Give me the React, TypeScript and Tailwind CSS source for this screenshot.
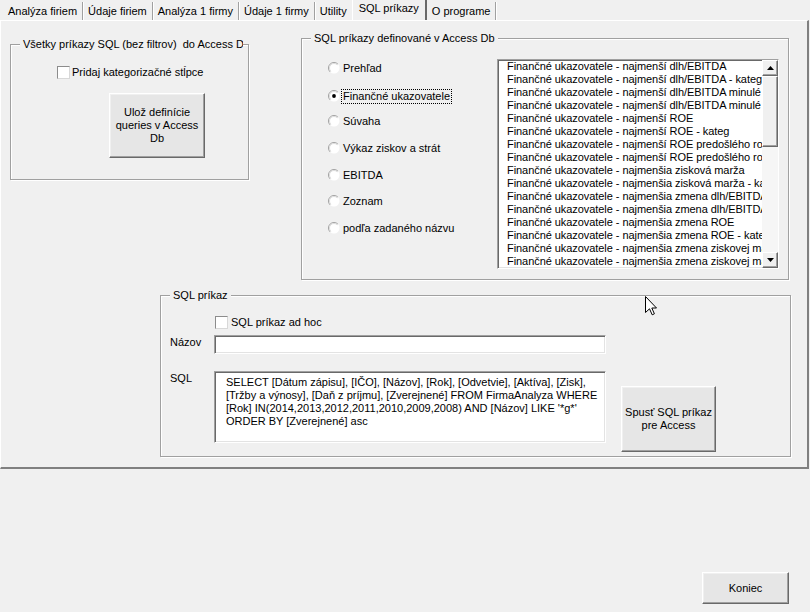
import React from "react";

const tabs = [
  "Analýza firiem",
  "Údaje firiem",
  "Analýza 1 firmy",
  "Údaje 1 firmy",
  "Utility",
  "SQL príkazy",
  "O programe",
];

const radios = [
  { label: "Prehľad", mt: "mt-[23px]" },
  { label: "Finančné ukazovatele", mt: "mt-[16px]", checked: true },
  { label: "Súvaha", mt: "mt-[13px]" },
  { label: "Výkaz ziskov a strát", mt: "mt-[15px]" },
  { label: "EBITDA", mt: "mt-[15px]" },
  { label: "Zoznam", mt: "mt-[14px]" },
  { label: "podľa zadaného názvu", mt: "mt-[15px]" },
];

const pre = "Finančné ukazovatele - ";
const items = [
  "najmenší dlh/EBITDA",
  "najmenší dlh/EBITDA - kategória",
  "najmenší dlh/EBITDA minulé",
  "najmenší dlh/EBITDA minulé - kategória",
  "najmenší ROE",
  "najmenší ROE - kateg",
  "najmenší ROE predošlého roku",
  "najmenší ROE predošlého roku - kategória",
  "najmenšia zisková marža",
  "najmenšia zisková marža - kategória",
  "najmenšia zmena dlh/EBITDA",
  "najmenšia zmena dlh/EBITDA - kategória",
  "najmenšia zmena ROE",
  "najmenšia zmena ROE - kategória",
  "najmenšia zmena ziskovej marže",
  "najmenšia zmena ziskovej marže - kategória",
];

const sqlLines = [
  "SELECT [Dátum zápisu], [IČO], [Názov], [Rok], [Odvetvie], [Aktíva], [Zisk],",
  "[Tržby a výnosy], [Daň z príjmu], [Zverejnené] FROM FirmaAnalyza WHERE",
  "[Rok] IN(2014,2013,2012,2011,2010,2009,2008) AND [Názov] LIKE '*g*'",
  "ORDER BY [Zverejnené] asc",
];

const btn =
  "flex flex-col items-center justify-center text-center leading-[13px] bg-[#e6e6e6] border border-t-white border-l-white border-r-[#696969] border-b-[#696969] shadow-[inset_-1px_-1px_0_#a0a0a0,inset_1px_1px_0_#f0f0f0]";

const sunken =
  "bg-white border border-t-[#a0a0a0] border-l-[#a0a0a0] border-r-white border-b-white shadow-[inset_1px_1px_0_#696969,inset_-1px_-1px_0_#e3e3e3]";

function Check() {
  return (
    <div className="w-[13px] h-[13px] shrink-0 bg-white border border-t-[#8c8c8c] border-l-[#8c8c8c] border-r-[#d8d8d8] border-b-[#d8d8d8]" />
  );
}

function Radio({ checked }: { checked?: boolean }) {
  return (
    <svg width="12" height="12" viewBox="0 0 12 12" className="shrink-0">
      <circle cx="6" cy="6" r="5.5" fill="#fff" />
      <path d="M2.1 9.9 A5.5 5.5 0 0 1 9.9 2.1" stroke="#a0a0a0" fill="none" />
      <path d="M2.8 9.2 A4.5 4.5 0 0 1 9.2 2.8" stroke="#dcdcdc" fill="none" />
      {checked && <circle cx="6" cy="6" r="1.9" fill="#000" />}
    </svg>
  );
}

function Group({
  caption,
  className,
  captionClass,
  children,
}: {
  caption: string;
  className: string;
  captionClass?: string;
  children: React.ReactNode;
}) {
  return (
    <div
      className={`relative shrink-0 border border-[#a0a0a0] shadow-[1px_1px_0_#fff,inset_1px_1px_0_#fff] ${className}`}
    >
      <span
        className={`absolute left-[9px] -top-[8px] px-[3px] bg-[#f0f0f0] leading-[14px] whitespace-nowrap overflow-hidden ${captionClass ?? ""}`}
      >
        {caption}
      </span>
      {children}
    </div>
  );
}

function Arrow({ up }: { up?: boolean }) {
  return (
    <div className="h-[16px] w-[16px] flex items-center justify-center bg-[#f0f0f0] border border-t-white border-l-white border-r-[#696969] border-b-[#696969] shadow-[inset_-1px_-1px_0_#a0a0a0]">
      <svg width="7" height="4" viewBox="0 0 7 4">
        {up ? <path d="M3.5 0 L7 4 L0 4 Z" fill="#000" /> : <path d="M0 0 L7 0 L3.5 4 Z" fill="#000" />}
      </svg>
    </div>
  );
}

export default function App() {
  return (
    <div className="relative w-[810px] h-[612px] bg-[#f0f0f0] text-black text-[11px] leading-[13px] font-['Liberation_Sans',Arial,sans-serif] overflow-hidden">
      {/* tabs */}
      <div className="flex h-[20px] items-end pl-[3px]">
        {tabs.map((t, i) =>
          t === "SQL príkazy" ? (
            <div
              key={i}
              className="h-[20px] px-[6px] pb-[3px] flex items-center bg-[#f0f0f0] border-l border-l-white border-r-2 border-r-[#696969]"
            >
              {t}
            </div>
          ) : (
            <div
              key={i}
              className={`h-[18px] px-[5px] flex items-center ${i === 4 ? "" : "border-r border-r-[#a0a0a0] shadow-[1px_0_0_#fff]"}`}
            >
              {t}
            </div>
          )
        )}
      </div>

      {/* page */}
      <div className="w-[809px] h-[449px] border-t border-t-white border-l border-l-white border-r-2 border-r-[#808080] border-b-2 border-b-[#808080]">
        <div className="flex items-start">
          <Group
            caption="Všetky príkazy SQL (bez filtrov)  do Access Db"
            captionClass="max-w-[223px] whitespace-pre"
            className="ml-[9px] mt-[23px] w-[239px] h-[136px]"
          >
            <div className="flex items-center ml-[46px] mt-[21px]">
              <Check />
              <span className="ml-[2px]">Pridaj kategorizačné stĺpce</span>
            </div>
            <div className={`${btn} ml-[98px] mt-[14px] w-[96px] h-[65px]`}>
              <span>Ulož definície</span>
              <span>queries v Access</span>
              <span>Db</span>
            </div>
          </Group>

          <Group
            caption="SQL príkazy definované v Access Db"
            className="ml-[52px] mt-[17px] w-[488px] h-[242px]"
          >
            <div className="flex">
              <div className="w-[195px] pl-[26px] flex flex-col">
                {radios.map((r, i) => (
                  <div key={i} className={`flex items-center h-[12px] ${r.mt}`}>
                    <Radio checked={r.checked} />
                    <span
                      className={`ml-[2px] px-[1px] leading-[13px] ${
                        r.checked ? "outline outline-1 outline-dotted outline-black" : ""
                      }`}
                    >
                      {r.label}
                    </span>
                  </div>
                ))}
              </div>
              <div className={`mt-[20px] w-[282px] h-[210px] flex ${sunken}`}>
                <div className="flex-1 overflow-hidden tracking-[-0.06px]">
                  {items.map((it, i) => (
                    <div key={i} className="h-[13px] leading-[13px] pl-[9px] whitespace-nowrap">
                      {pre + it}
                    </div>
                  ))}
                </div>
                <div className="w-[16px] flex flex-col bg-[#f6f6f6]">
                  <Arrow up />
                  <div className="h-[71px] bg-[#f0f0f0] border border-t-white border-l-white border-r-[#696969] border-b-[#696969] shadow-[inset_-1px_-1px_0_#a0a0a0]" />
                  <div className="flex-1" />
                  <Arrow />
                </div>
              </div>
            </div>
          </Group>
        </div>

        <Group caption="SQL príkaz" className="ml-[159px] mt-[15px] w-[631px] h-[162px]">
          <div className="flex items-center ml-[54px] mt-[20px]">
            <Check />
            <span className="ml-[3px]">SQL príkaz ad hoc</span>
          </div>
          <div className="flex mt-[6px] ml-[9px]">
            <span className="w-[44px] pt-[1px]">Názov</span>
            <div className={`${sunken} w-[392px] h-[19px]`} />
          </div>
          <div className="flex mt-[17px] ml-[9px]">
            <span className="w-[44px] pt-[1px]">SQL</span>
            <div className={`${sunken} w-[392px] h-[72px] pl-[11px] pt-[4px] leading-[13px] whitespace-nowrap overflow-hidden`}>
              {sqlLines.map((l, i) => (
                <div key={i}>{l}</div>
              ))}
            </div>
            <div className={`${btn} ml-[15px] mt-[15px] w-[95px] h-[66px]`}>
              <span>Spusť SQL príkaz</span>
              <span>pre Access</span>
            </div>
          </div>
        </Group>
      </div>

      {/* close */}
      <div className={`${btn} ml-[702px] mt-[103px] w-[87px] h-[32px]`}>Koniec</div>

      {/* mouse cursor */}
      <svg className="absolute left-[645px] top-[296px]" width="13" height="20" viewBox="0 0 13 20">
        <path d="M0.5 0.5 L0.5 16.5 L4.5 12.8 L7.2 18.8 L9.4 17.8 L6.8 12 L11.5 12 Z" fill="#fff" stroke="#000" strokeLinejoin="round" />
      </svg>
    </div>
  );
}
